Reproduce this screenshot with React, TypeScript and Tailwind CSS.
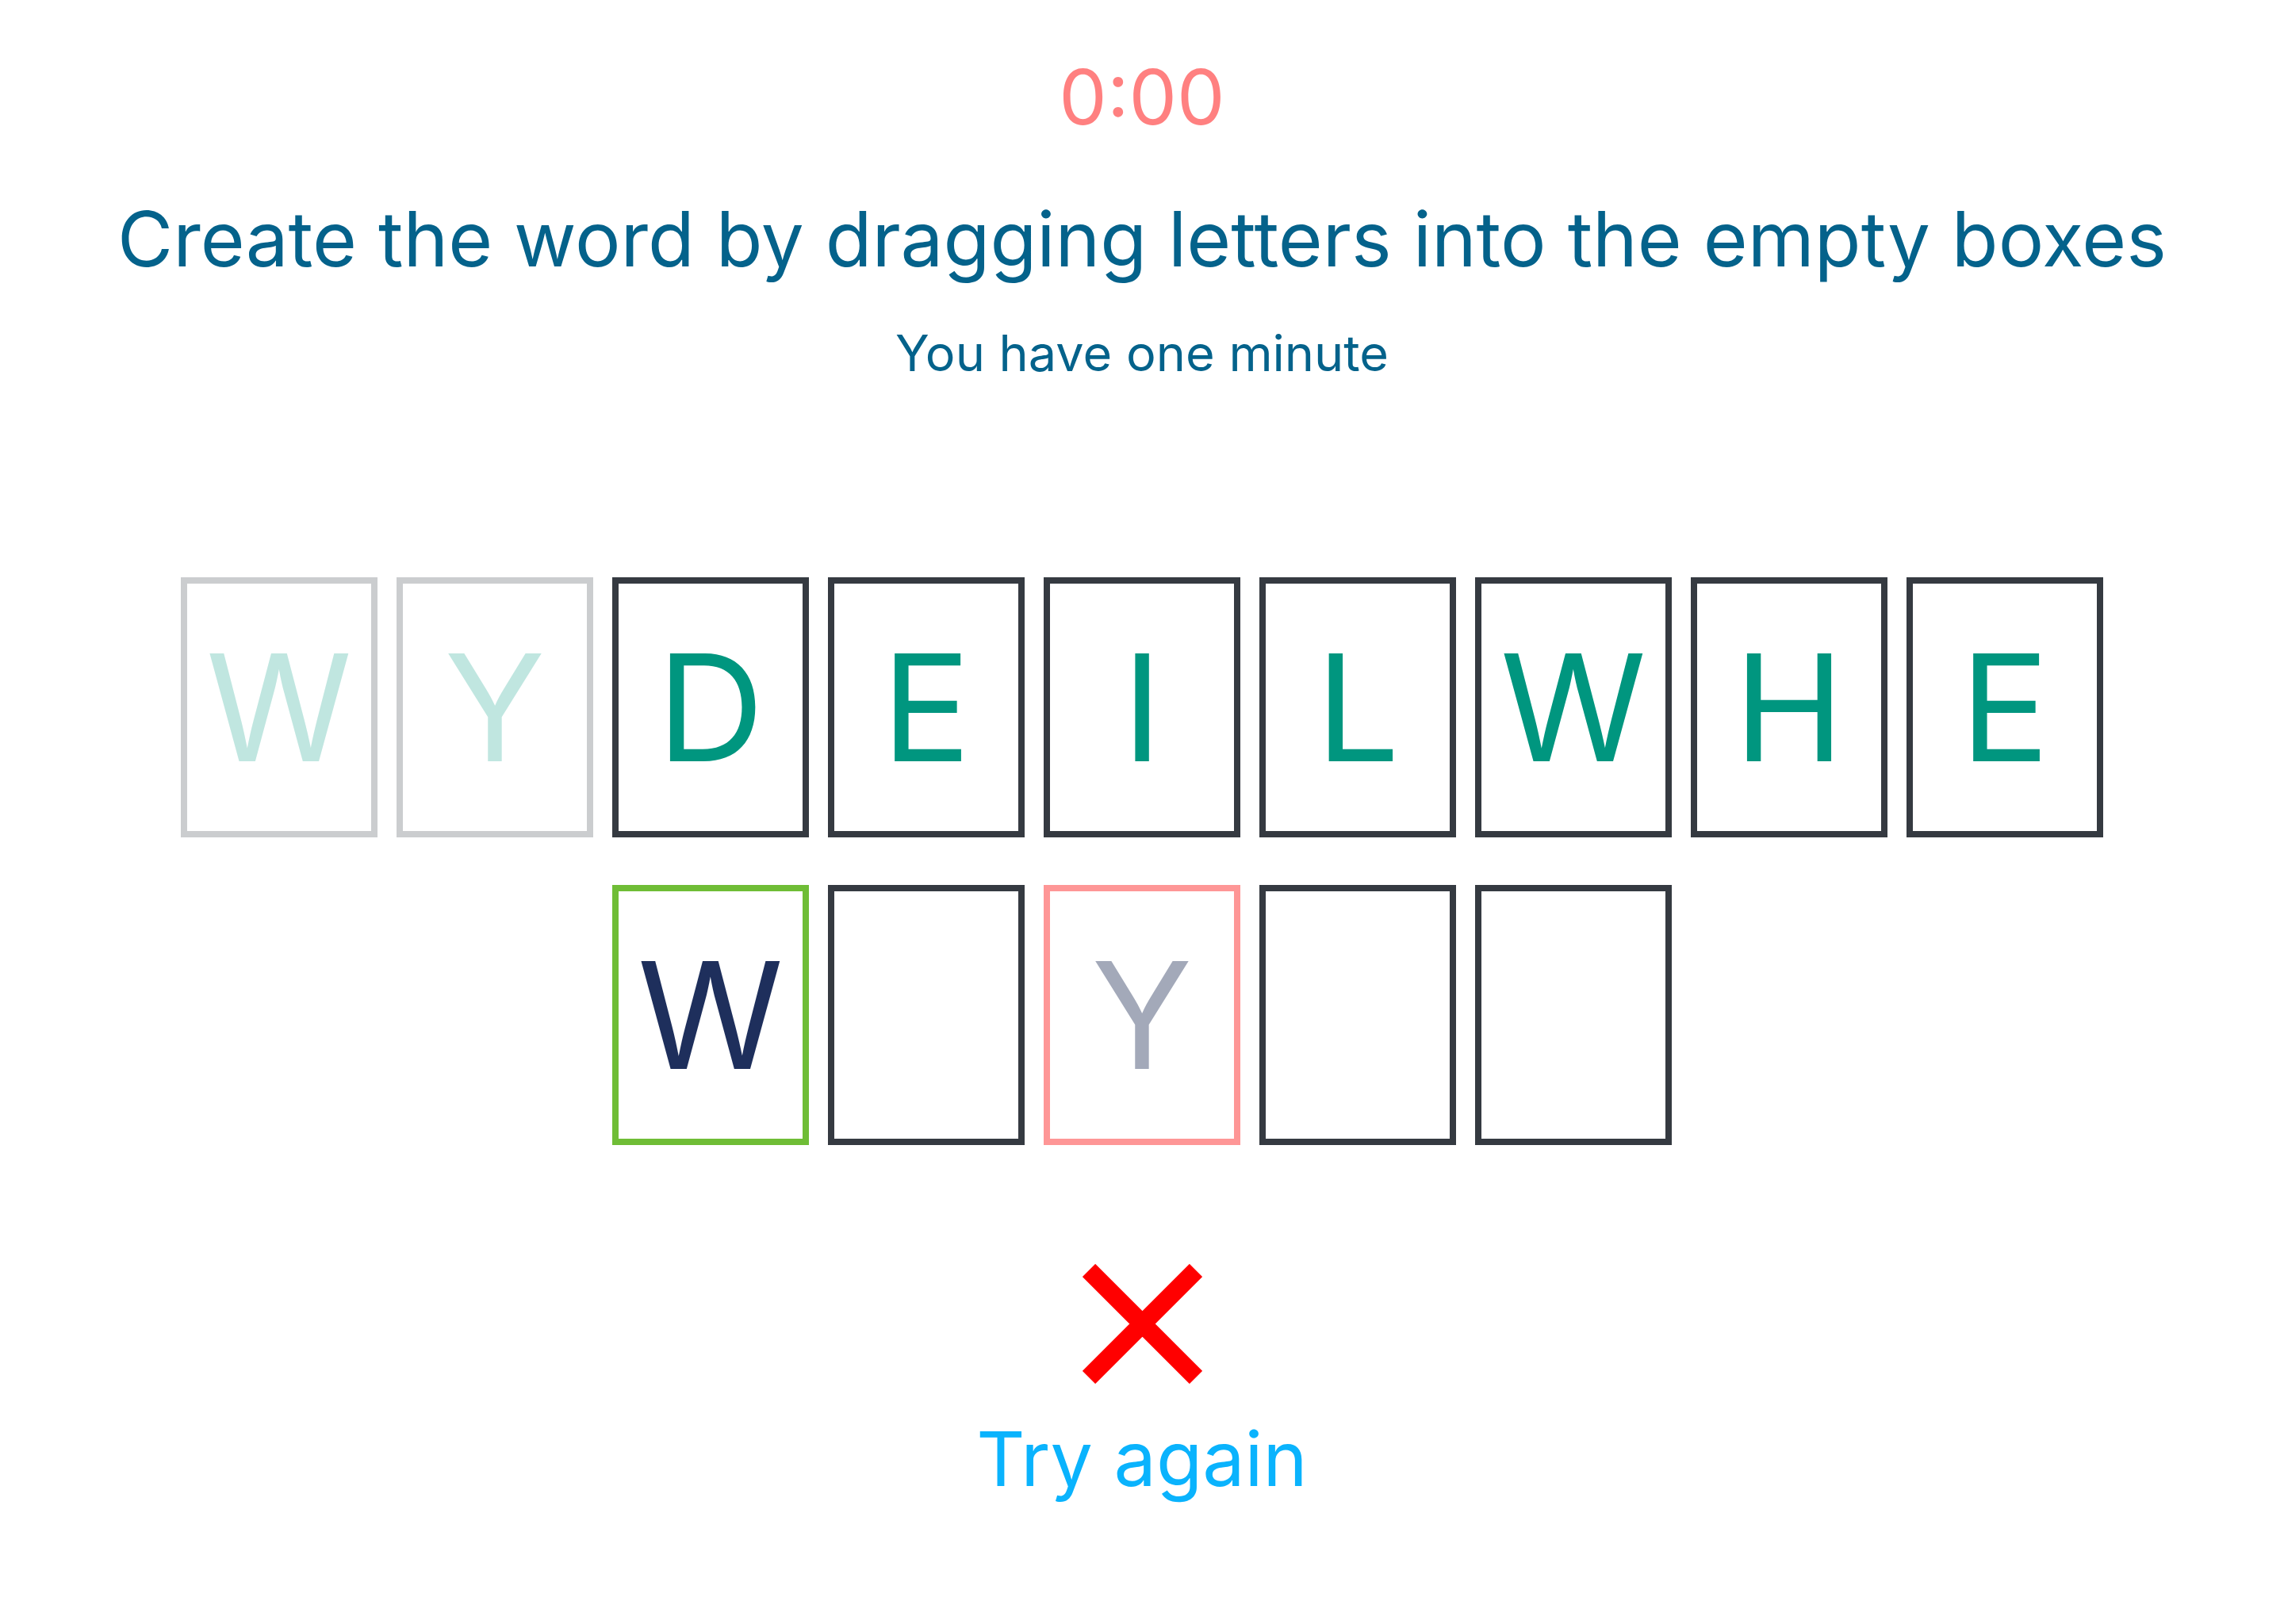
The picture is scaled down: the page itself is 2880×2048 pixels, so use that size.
import React from 'react';

type Tile = { letter?: string; tone: 'used' | 'pool' | 'right' | 'wrong' | 'empty' };

const pool: Tile[] = [
  { letter: 'W', tone: 'used' },
  { letter: 'Y', tone: 'used' },
  { letter: 'D', tone: 'pool' },
  { letter: 'E', tone: 'pool' },
  { letter: 'I', tone: 'pool' },
  { letter: 'L', tone: 'pool' },
  { letter: 'W', tone: 'pool' },
  { letter: 'H', tone: 'pool' },
  { letter: 'E', tone: 'pool' },
];

const answer: Tile[] = [
  { letter: 'W', tone: 'right' },
  { tone: 'empty' },
  { letter: 'Y', tone: 'wrong' },
  { tone: 'empty' },
  { tone: 'empty' },
];

const toneClass: Record<Tile['tone'], string> = {
  used: 'border-[#cbcdcf] text-[#c0e6e0]',
  pool: 'border-[#353a41] text-[#00967f]',
  right: 'border-[#6fbd36] text-[#1e2f5c]',
  wrong: 'border-[#fe9696] text-[#a3a9b9]',
  empty: 'border-[#353a41]',
};

function LetterBox({ tile }: { tile: Tile }) {
  return (
    <div
      className={`w-[248px] h-[328px] border-[8px] flex items-center justify-center text-[187px] leading-none ${toneClass[tile.tone]}`}
    >
      {tile.letter}
    </div>
  );
}

export default function App() {
  return (
    <div className="min-h-[2048px] w-full bg-white flex flex-col items-center font-['Inter','Open_Sans',sans-serif]">
      <div className="mt-[74px] text-[96px] leading-none text-[#ff8080]">0:00</div>
      <h1 className="mt-[83px] text-[96px] leading-none text-[#04628b] whitespace-nowrap">
        Create the word by dragging letters into the empty boxes
      </h1>
      <p className="mt-[65px] text-[63px] leading-none text-[#04628b]">You have one minute</p>

      <div className="mt-[251px] flex gap-[24px]">
        {pool.map((t, i) => (
          <LetterBox key={i} tile={t} />
        ))}
      </div>
      <div className="mt-[60px] flex gap-[24px]">
        {answer.map((t, i) => (
          <LetterBox key={i} tile={t} />
        ))}
      </div>

      <svg className="mt-[150px]" width="151" height="151" viewBox="0 0 151 151">
        <path d="M8 8 L143 143 M143 8 L8 143" stroke="#ff0000" strokeWidth="23" fill="none" />
      </svg>
      <div className="mt-[47px] text-[95px] leading-none text-[#0ab3fd]">Try again</div>
    </div>
  );
}
